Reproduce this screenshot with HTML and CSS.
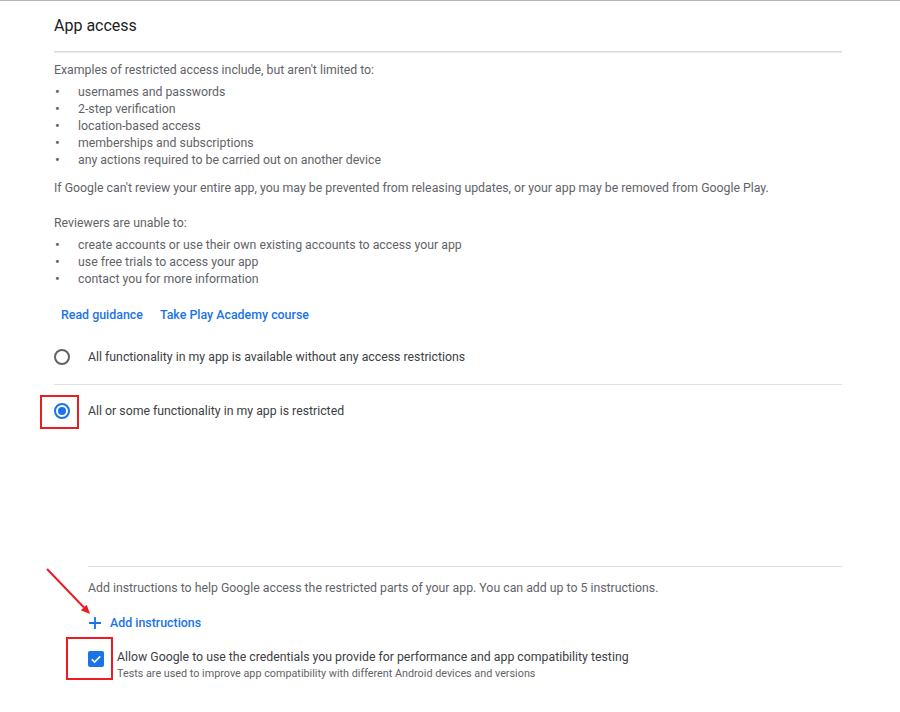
FILE: index.html
```html
<!DOCTYPE html>
<html lang="en">
<head>
    <meta charset="UTF-8">
    <meta name="viewport" content="width=device-width, initial-scale=1.0">
    <title>App access</title>
    <link rel="stylesheet" href="styles.css">
</head>
<body>
    <div class="topline"></div>

    <main class="page">
        <!-- Header -->
        <header class="page-head">
            <h1>App access</h1>
        </header>

        <!-- Intro text -->
        <section class="intro">
            <p class="first">Examples of restricted access include, but aren't limited to:</p>
            <ul class="bullets">
                <li>usernames and passwords</li>
                <li>2-step verification</li>
                <li>location-based access</li>
                <li>memberships and subscriptions</li>
                <li>any actions required to be carried out on another device</li>
            </ul>
            <p class="warn">If Google can't review your entire app, you may be prevented from releasing updates, or your app may be removed from Google Play.</p>
            <p class="reviewers">Reviewers are unable to:</p>
            <ul class="bullets">
                <li>create accounts or use their own existing accounts to access your app</li>
                <li>use free trials to access your app</li>
                <li>contact you for more information</li>
            </ul>
            <div class="links">
                <a href="#">Read guidance</a>
                <a href="#">Take Play Academy course</a>
            </div>
        </section>

        <!-- Access options -->
        <div class="options">
            <label class="option">
                <span class="radio"></span>
                <span>All functionality in my app is available without any access restrictions</span>
            </label>
            <label class="option">
                <span class="radio checked"></span>
                <span>All or some functionality in my app is restricted</span>
                <span class="mark mark-radio"></span>
            </label>
        </div>

        <!-- Instructions -->
        <div class="instructions">
            <svg class="arrow" width="60" height="52" viewBox="0 0 60 52">
                <line x1="4" y1="2" x2="41" y2="40.5" stroke="#ec1c24" stroke-width="2"/>
                <polygon points="47,47 37.9,43.3 43.7,37.7" fill="#ec1c24"/>
            </svg>
            <p>Add instructions to help Google access the restricted parts of your app. You can add up to 5 instructions.</p>
            <a href="#" class="add-link">
                <svg width="14" height="14" viewBox="0 0 14 14">
                    <path d="M7 1v12M1 7h12" stroke="#1a73e8" stroke-width="1.8" fill="none"/>
                </svg>
                Add instructions
            </a>
            <div class="check-row">
                <span class="checkbox">
                    <svg width="16" height="16" viewBox="0 0 16 16">
                        <path d="M3.8 8.2l2.8 2.8 5.6-5.6" stroke="#fff" stroke-width="1.6" fill="none"/>
                    </svg>
                </span>
                <div>
                    <div class="check-title">Allow Google to use the credentials you provide for performance and app compatibility testing</div>
                    <div class="check-sub">Tests are used to improve app compatibility with different Android devices and versions</div>
                </div>
                <span class="mark mark-check"></span>
            </div>
        </div>
    </main>
</body>
</html>
```

FILE: styles.css
```css
body {
    font-family: 'Roboto', 'Liberation Sans', sans-serif;
    margin: 0;
    padding: 0;
    background-color: #fff;
    color: #5f6368;
    font-size: 12.3px;
    line-height: 17px;
}

.topline {
    height: 1px;
    background-color: #b4b4b4;
}

.page {
    width: 788px;
    margin-left: 54px;
}

.page-head {
    padding: 13px 0 13px;
    border-bottom: 1px solid #d8d8d8;
    box-shadow: 0 1px 0 #ececec;
}

.page-head h1 {
    margin: 0;
    font-size: 16px;
    line-height: 24px;
    font-weight: 400;
    color: #202124;
}

.intro p {
    margin: 0;
}

.intro .first {
    margin-top: 10px;
}

.intro .warn {
    margin-top: 11px;
}

.intro .reviewers {
    margin-top: 18px;
}

.bullets {
    list-style: none;
    margin: 5px 0 0;
    padding: 0;
}

.bullets li {
    display: flex;
}

.bullets li::before {
    content: "\2022";
    width: 23px;
    padding-left: 1px;
    font-size: 14px;
    color: #5f6368;
}

.links {
    display: flex;
    gap: 3px;
    margin-top: 9px;
}

.links a {
    color: #1a73e8;
    text-decoration: none;
    font-weight: 500;
    font-size: 12.4px;
    padding: 9px 7px 8px;
}

.options {
    color: #3c4043;
}

.option {
    position: relative;
    display: flex;
    align-items: center;
    min-height: 20px;
    padding: 16px 0 17px;
}

.option:first-child {
    border-bottom: 1px solid #e0e0e0;
}

.radio {
    width: 12px;
    height: 12px;
    border: 2px solid #5f6368;
    border-radius: 50%;
    margin-right: 18px;
    flex-shrink: 0;
    position: relative;
}

.radio.checked {
    border-color: #1a73e8;
}

.radio.checked::after {
    content: "";
    position: absolute;
    left: 2px;
    top: 2px;
    width: 8px;
    height: 8px;
    border-radius: 50%;
    background-color: #1a73e8;
}

/* red annotation boxes */
.mark {
    position: absolute;
    border: 2px solid #ec1c24;
    box-sizing: border-box;
}

.mark-radio {
    left: -14px;
    top: 10px;
    width: 39px;
    height: 34px;
}

.mark-check {
    left: -22px;
    top: -12px;
    width: 47px;
    height: 43px;
}

.instructions {
    position: relative;
    margin: 128px 0 0 34px;
    border-top: 1px solid #e0e0e0;
    padding-top: 13px;
}

.instructions p {
    margin: 0;
}

.arrow {
    position: absolute;
    left: -45px;
    top: 0;
}

.add-link {
    display: inline-flex;
    align-items: center;
    gap: 8px;
    margin-top: 17px;
    color: #1a73e8;
    text-decoration: none;
    font-weight: 500;
    font-size: 12.4px;
}

.check-row {
    position: relative;
    display: flex;
    gap: 13px;
    margin-top: 14px;
}

.checkbox {
    width: 16px;
    height: 16px;
    margin-top: 2px;
    border-radius: 2px;
    background-color: #1a73e8;
    flex-shrink: 0;
}

.checkbox svg {
    display: block;
}

.check-title {
    color: #3c4043;
}

.check-sub {
    font-size: 10.8px;
    line-height: 15px;
    color: #5f6368;
}
```
